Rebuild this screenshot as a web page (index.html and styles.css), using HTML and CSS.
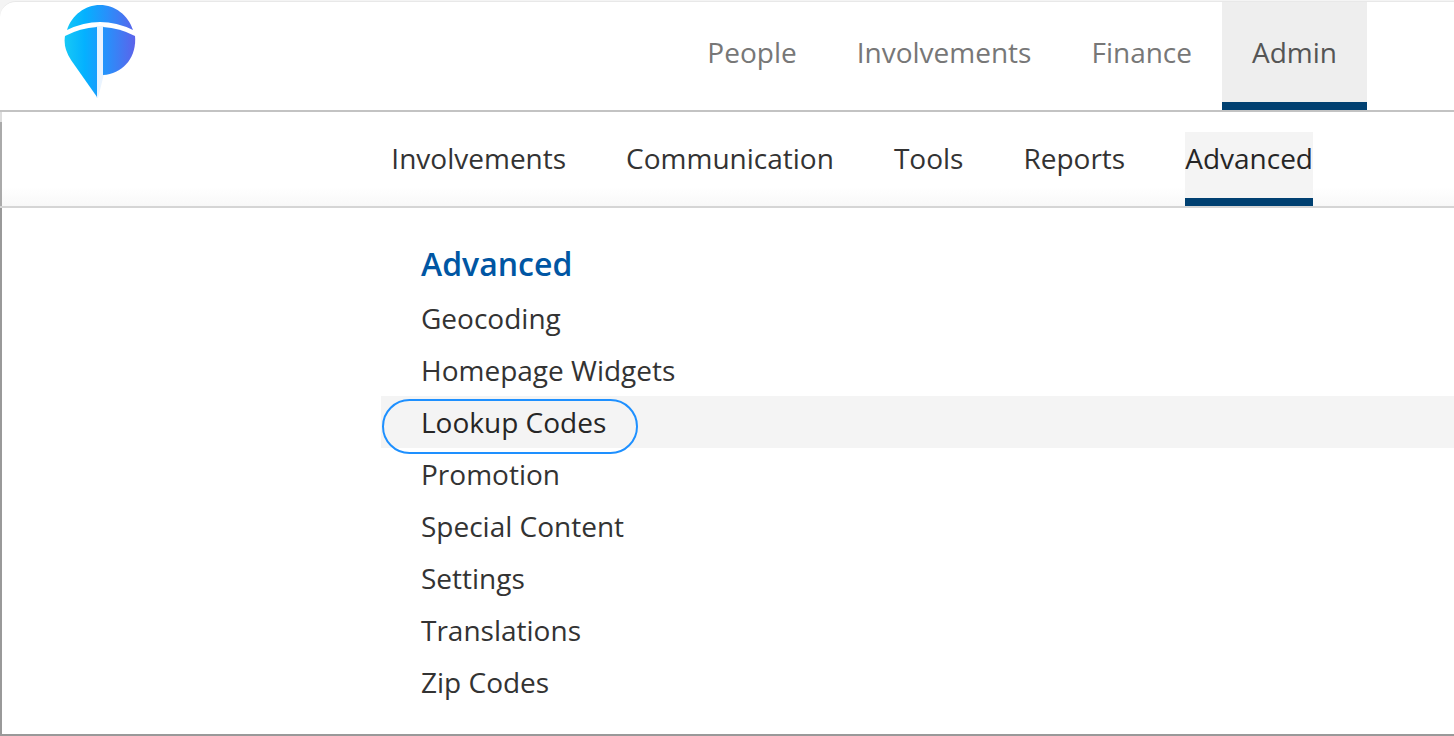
FILE: index.html
```html
<!DOCTYPE html>
<html lang="en">
<head>
  <meta charset="UTF-8">
  <meta name="viewport" content="width=device-width, initial-scale=1.0">
  <title>Admin - Advanced</title>
  <link rel="stylesheet" href="styles.css">
</head>
<body>
  <header class="topbar">
    <a class="logo" href="#" aria-label="Home">
      <svg width="72" height="94" viewBox="14 4 72 94">
        <defs>
          <linearGradient id="pin" gradientUnits="userSpaceOnUse" x1="15" y1="0" x2="85" y2="0">
            <stop offset="0" stop-color="#16c8f6"/>
            <stop offset="0.28" stop-color="#04b1ff"/>
            <stop offset="0.6" stop-color="#2890fb"/>
            <stop offset="1" stop-color="#5c63ea"/>
          </linearGradient>
        </defs>
        <path fill="#eaf4ff" d="M46 26h8v48l-6 24h-2z"/>
        <g fill="url(#pin)">
          <path d="M17 30C22 15 35 5 50 5s28 10 33 25Q50 14 17 30z"/>
          <path d="M15 36Q30 28 47 27v70L21 60Q13 48 15 36z"/>
          <path d="M53 27q17 1 32 9c2 21-12 38-32 39z"/>
        </g>
      </svg>
    </a>
    <nav class="main-nav">
      <a href="#">People</a>
      <a href="#">Involvements</a>
      <a href="#">Finance</a>
      <a href="#" class="active">Admin</a>
    </nav>
  </header>

  <div class="dropdown">
    <nav class="sub-nav">
      <a href="#">Involvements</a>
      <a href="#">Communication</a>
      <a href="#">Tools</a>
      <a href="#">Reports</a>
      <a href="#" class="active">Advanced</a>
    </nav>

    <div class="menu">
      <h2>Advanced</h2>
      <ul>
        <li><a href="#">Geocoding</a></li>
        <li><a href="#">Homepage Widgets</a></li>
        <li class="selected"><a href="#">Lookup Codes</a><span class="ring"></span></li>
        <li><a href="#">Promotion</a></li>
        <li><a href="#">Special Content</a></li>
        <li><a href="#">Settings</a></li>
        <li><a href="#">Translations</a></li>
        <li><a href="#">Zip Codes</a></li>
      </ul>
    </div>
  </div>
</body>
</html>
```

FILE: styles.css
```css
* {
  box-sizing: border-box;
}

body {
  margin: 0;
  background: #f4f4f4;
  font-family: "Open Sans", "Noto Sans", sans-serif;
  font-size: 28px;
  color: #333;
}

a {
  color: inherit;
  text-decoration: none;
}

/* top bar */
.topbar {
  display: flex;
  justify-content: space-between;
  margin-top: 1px;
  padding: 0 87px 0 64px;
  background: #fff;
  border-top: 1px solid #e8e8e8;
  border-bottom: 2px solid #c3c3c3;
  border-top-left-radius: 16px;
}

.logo {
  padding-top: 2px;
}

.logo svg {
  display: block;
}

.main-nav {
  display: flex;
}

.main-nav a {
  padding: 0 30px;
  line-height: 100px;
  border-bottom: 8px solid transparent;
  color: #777;
}

.main-nav a.active {
  background: #eee;
  border-bottom-color: #004071;
  color: #555;
}

/* dropdown */
.dropdown {
  background: #fff;
  border-bottom: 2px solid #999;
}

.sub-nav {
  display: flex;
  justify-content: flex-end;
  gap: 60px;
  padding: 20px 141px 0 0;
  background:
    linear-gradient(#ddd 10px, #aaa 10px) left / 2px 100% no-repeat,
    linear-gradient(#fff 80%, #f8f8f8);
  border-bottom: 2px solid #d5d5d5;
}

.sub-nav a {
  padding-bottom: 14px;
  line-height: 52px;
  border-bottom: 8px solid transparent;
}

.sub-nav a.active {
  background: #f4f4f4;
  border-bottom-color: #004071;
  color: #262626;
}

.menu {
  padding: 28px 0 26px 379px;
  border-left: 2px solid #999;
}

.menu h2 {
  margin: 0;
  padding: 2px 0 2px 40px;
  font-size: 32px;
  font-weight: 600;
  line-height: 52px;
  color: #0056a3;
}

.menu ul {
  margin: 0;
  padding: 0;
  list-style: none;
}

.menu li {
  position: relative;
}

.menu li a {
  display: block;
  padding-left: 40px;
  line-height: 52px;
}

.menu .selected {
  background: #f4f4f4;
  color: #262626;
}

/* outline over the selected row */
.ring {
  position: absolute;
  top: 3px;
  left: 1px;
  width: 256px;
  height: 55px;
  border: 2px solid #1e90ff;
  border-radius: 28px;
  pointer-events: none;
}
```
